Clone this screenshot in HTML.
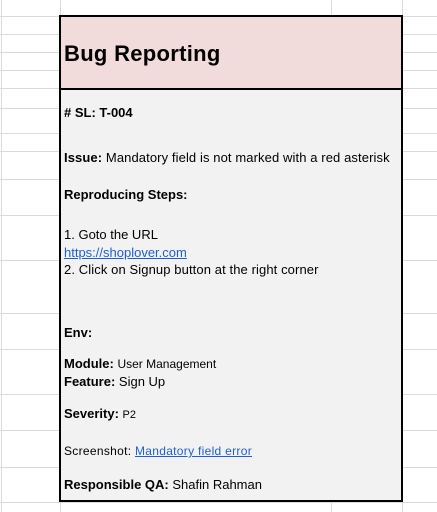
<!DOCTYPE html>
<html><head><style>
body{margin:0;width:437px;height:512px;overflow:hidden;background:#fff;position:relative;font-family:"Liberation Sans",sans-serif;color:#000}
.h{position:absolute;left:0;width:437px;height:1px;background:#dadada}
.v{position:absolute;top:0;height:512px;width:1px;background:#dadada}
#box{position:absolute;left:59px;top:15px;width:340px;height:483px;border:2px solid #000;background:#f2f2f2}
#hdr{position:absolute;left:0;top:0;width:340px;height:71px;background:#f2dcdb;border-bottom:2px solid #000}
.t{position:absolute;left:3px;white-space:nowrap;font-size:13px;letter-spacing:0}
b{font-weight:bold}
a{color:#1f5fd6;text-decoration:underline}
</style></head><body>
<div class="h" style="top:16px"></div><div class="h" style="top:34px"></div><div class="h" style="top:52px"></div><div class="h" style="top:70px"></div><div class="h" style="top:88px"></div><div class="h" style="top:108px"></div><div class="h" style="top:133px"></div><div class="h" style="top:151px"></div><div class="h" style="top:179px"></div><div class="h" style="top:215px"></div><div class="h" style="top:260px"></div><div class="h" style="top:313px"></div><div class="h" style="top:349px"></div><div class="h" style="top:394px"></div><div class="h" style="top:430px"></div><div class="h" style="top:467px"></div><div class="h" style="top:502px"></div>
<div class="v" style="left:1px"></div><div class="v" style="left:60px"></div><div class="v" style="left:331px"></div><div class="v" style="left:402px"></div>
<div id="box">
<div id="hdr"><div class="t" style="top:24px;font-size:22px;font-weight:bold;letter-spacing:0.3px">Bug Reporting</div></div>
<div class="t" style="top:88px"><b># SL: T-004</b></div>
<div class="t" style="top:133px;font-size:13px;letter-spacing:0.1px"><b>Issue:</b> Mandatory field is not marked with a red asterisk</div>
<div class="t" style="top:170px"><b>Reproducing Steps:</b></div>
<div class="t" style="top:210px">1. Goto the URL</div>
<div class="t" style="top:228px"><a>https://shoplover.com</a></div>
<div class="t" style="top:245px;letter-spacing:0.1px">2. Click on Signup button at the right corner</div>
<div class="t" style="top:308px"><b>Env:</b></div>
<div class="t" style="top:339px"><b>Module:</b> <span style="font-size:12px">User Management</span></div>
<div class="t" style="top:357px"><b>Feature:</b> Sign Up</div>
<div class="t" style="top:389px"><b>Severity:</b> <span style="font-size:11px">P2</span></div>
<div class="t" style="top:427px;font-size:12px;letter-spacing:0.3px">Screenshot: <a>Mandatory field error</a></div>
<div class="t" style="top:460px"><b>Responsible QA:</b> Shafin Rahman</div>
</div>
</body></html>
